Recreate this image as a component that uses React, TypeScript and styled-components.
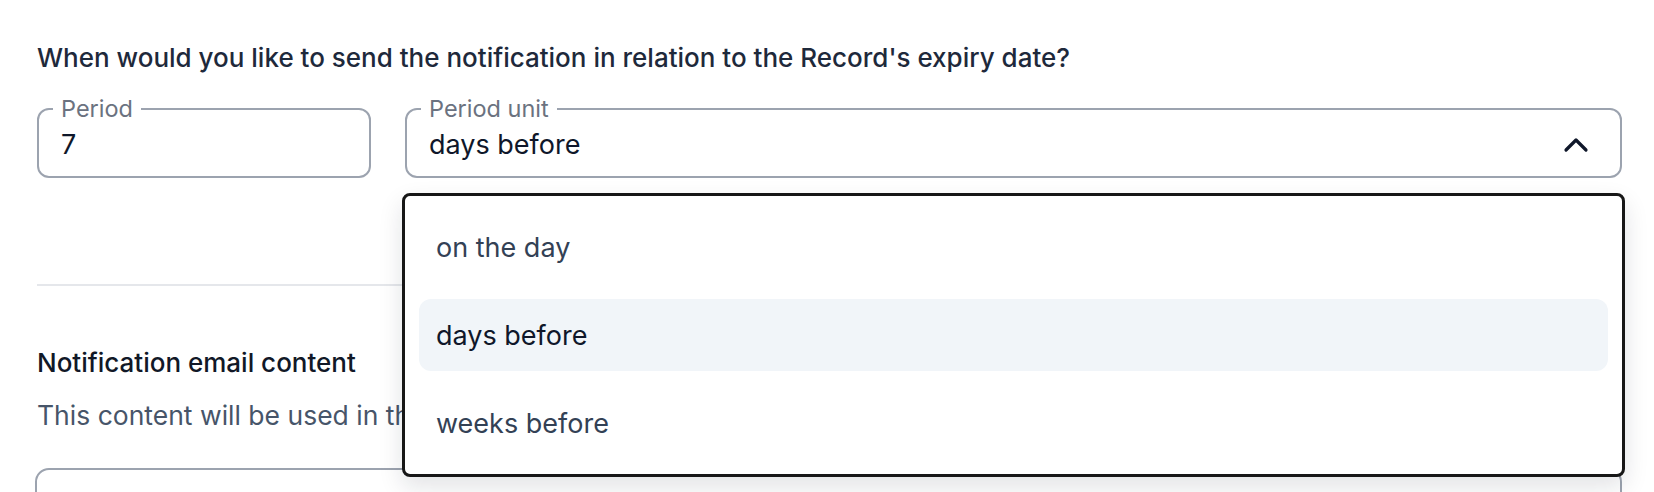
import React from 'react'
import styled, { createGlobalStyle } from 'styled-components'

const GlobalStyle = createGlobalStyle`
  body {
    margin: 0;
    background: #ffffff;
    font-family: 'Inter', 'Noto Sans', sans-serif;
    -webkit-font-smoothing: antialiased;
  }
`

const Page = styled.div`
  padding: 40px 32px 0 37px;
  height: 492px;
  box-sizing: border-box;
  overflow: hidden;
`

const Question = styled.p`
  margin: 0 0 21px 0;
  font-size: 26px;
  line-height: 36px;
  font-weight: 500;
  color: #1e293b;
`

const FieldRow = styled.div`
  display: grid;
  grid-template-columns: 334px 1fr;
  gap: 34px;
`

const Field = styled.fieldset`
  position: relative;
  margin: 0;
  padding: 7px 22px 14px 22px;
  border: 2px solid #9ca3af;
  border-radius: 12px;
  min-width: 0;
`

const Legend = styled.legend`
  margin-left: -8px;
  padding: 0 8px;
  font-size: 23.5px;
  line-height: 24px;
  color: #6b7280;
`

const ValueLine = styled.div`
  display: flex;
  align-items: center;
  justify-content: space-between;
  font-size: 27px;
  line-height: 34px;
  color: #0f172a;
`

const Chevron = styled.svg`
  width: 26px;
  height: 16px;
  margin-right: 9px;
  color: #0f172a;
`

const Menu = styled.ul`
  position: absolute;
  top: calc(100% + 17px);
  left: -5px;
  right: -5px;
  margin: 0;
  padding: 15px 14px;
  list-style: none;
  background: #ffffff;
  border: 3px solid #171717;
  border-radius: 8px;
  box-shadow: 0 10px 24px rgba(15, 23, 42, 0.12);
  display: flex;
  flex-direction: column;
  gap: 16px;
  z-index: 2;
`

const Option = styled.li<{ $active?: boolean }>`
  height: 72px;
  display: flex;
  align-items: center;
  padding: 0 17px;
  border-radius: 12px;
  font-size: 27px;
  color: ${p => (p.$active ? '#0f172a' : '#334155')};
  background: ${p => (p.$active ? '#f1f5f9' : 'transparent')};
`

const Divider = styled.hr`
  margin: 106px 0 0 0;
  border: none;
  border-top: 2px solid #e5e7eb;
`

const SectionTitle = styled.h3`
  margin: 59px 0 0 0;
  font-size: 26px;
  line-height: 36px;
  font-weight: 500;
  color: #111827;
`

const SectionText = styled.p`
  margin: 16px 0 0 0;
  font-size: 26.5px;
  line-height: 36px;
  color: #475569;
`

const EditorBox = styled.div`
  margin: 35px 0 0 -2px;
  height: 120px;
  border: 2px solid #9ca3af;
  border-radius: 14px;
`

const options = ['on the day', 'days before', 'weeks before']

const App: React.FC = () => {
  const selected = 'days before'

  return (
    <Page>
      <GlobalStyle />
      <Question>When would you like to send the notification in relation to the Record's expiry date?</Question>

      <FieldRow>
        <Field>
          <Legend>Period</Legend>
          <ValueLine>7</ValueLine>
        </Field>

        <Field>
          <Legend>Period unit</Legend>
          <ValueLine>
            {selected}
            <Chevron viewBox="0 0 26 16" fill="none">
              <path d="M3 13 L13 3 L23 13" stroke="currentColor" strokeWidth="3.2" strokeLinecap="round" strokeLinejoin="round" />
            </Chevron>
          </ValueLine>

          <Menu>
            {options.map(o => (
              <Option key={o} $active={o === selected}>{o}</Option>
            ))}
          </Menu>
        </Field>
      </FieldRow>

      <Divider />

      <SectionTitle>Notification email content</SectionTitle>
      <SectionText>This content will be used in the notification email sent to the Record owner.</SectionText>
      <EditorBox />
    </Page>
  )
}

export default App
